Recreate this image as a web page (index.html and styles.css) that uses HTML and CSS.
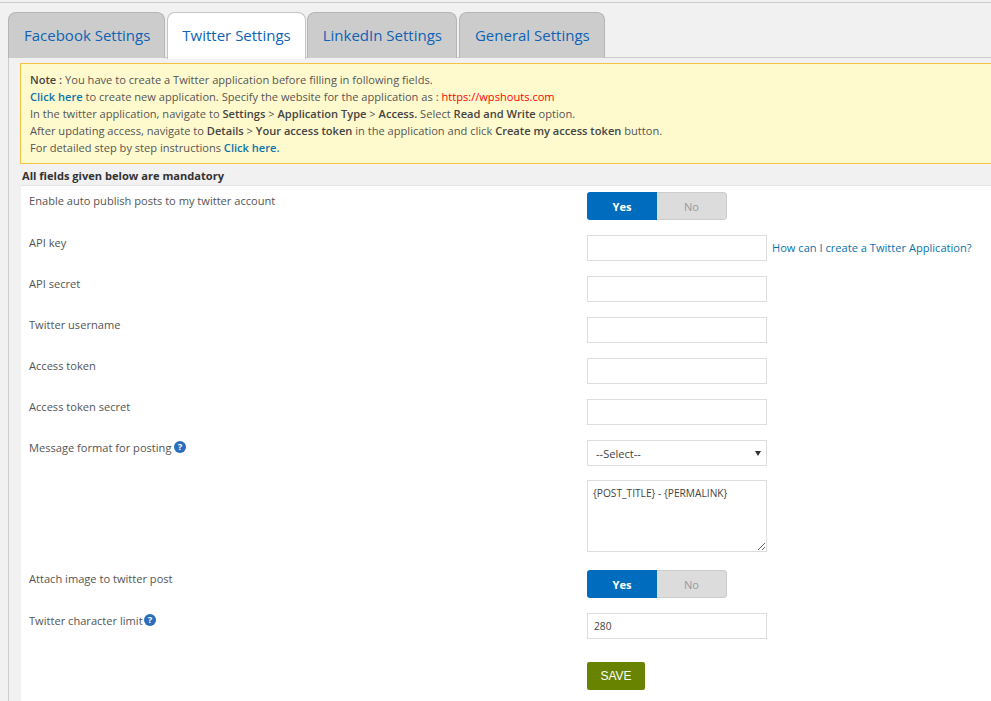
FILE: index.html
```html
<!DOCTYPE html>
<html lang="en">
<head>
<meta charset="utf-8">
<title>Twitter Settings</title>
<link rel="stylesheet" href="styles.css">
</head>
<body>
<div class="page">
  <nav class="tabs">
    <a class="tab">Facebook Settings</a>
    <a class="tab active">Twitter Settings</a>
    <a class="tab">LinkedIn Settings</a>
    <a class="tab">General Settings</a>
  </nav>
  <div class="content">
    <div class="note">
      <b>Note :</b> You have to create a Twitter application before filling in following fields.<br>
      <a class="link"><b>Click here</b></a> to create new application. Specify the website for the application as : <span class="red">https://wpshouts.com</span><br>
      In the twitter application, navigate to <b>Settings</b> &gt; <b>Application Type</b> &gt; <b>Access.</b> Select <b>Read and Write</b> option.<br>
      After updating access, navigate to <b>Details</b> &gt; <b>Your access token</b> in the application and click <b>Create my access token</b> button.<br>
      For detailed step by step instructions <a class="link"><b>Click here.</b></a>
    </div>
    <div class="mandatory">All fields given below are mandatory</div>
    <div class="panel">
      <div class="row row-toggle">
        <label class="label">Enable auto publish posts to my twitter account</label>
        <div class="field"><div class="toggle"><span class="yes">Yes</span><span class="no">No</span></div></div>
      </div>
      <div class="row">
        <label class="label">API key</label>
        <div class="field"><input class="input" type="text"><a class="help-link">How can I create a Twitter Application?</a></div>
      </div>
      <div class="row"><label class="label">API secret</label><div class="field"><input class="input" type="text"></div></div>
      <div class="row"><label class="label">Twitter username</label><div class="field"><input class="input" type="text"></div></div>
      <div class="row"><label class="label">Access token</label><div class="field"><input class="input" type="text"></div></div>
      <div class="row"><label class="label">Access token secret</label><div class="field"><input class="input" type="text"></div></div>
      <div class="row row-select">
        <label class="label">Message format for posting <svg class="q" viewBox="0 0 12 12"><circle cx="6" cy="6" r="6" fill="#2a6ebb"/><text x="6" y="9.4" text-anchor="middle" class="q-mark">?</text></svg></label>
        <div class="field"><div class="select"><span>--Select--</span><i class="caret"></i></div></div>
      </div>
      <div class="row row-area">
        <div class="label"></div>
        <div class="field"><textarea class="area">{POST_TITLE} - {PERMALINK}</textarea></div>
      </div>
      <div class="row row-toggle">
        <label class="label">Attach image to twitter post</label>
        <div class="field"><div class="toggle"><span class="yes">Yes</span><span class="no">No</span></div></div>
      </div>
      <div class="row row-limit">
        <label class="label">Twitter character limit <svg class="q q-tight" viewBox="0 0 12 12"><circle cx="6" cy="6" r="6" fill="#2a6ebb"/><text x="6" y="9.4" text-anchor="middle" class="q-mark">?</text></svg></label>
        <div class="field"><input class="input input-small" type="text" value="280"></div>
      </div>
      <div class="row">
        <div class="label"></div>
        <div class="field"><button class="save" type="button">SAVE</button></div>
      </div>
    </div>
  </div>
</div>
</body>
</html>
```
FILE: styles.css
```css
* { box-sizing: border-box; }
html, body { margin: 0; height: 100%; overflow: hidden; }
body {
  background: #f1f1f1;
  font-family: "Open Sans", sans-serif;
  font-size: 11.1px;
  color: #444;
}
.page { border-top: 1px solid #ccc; margin-top: 2px; padding: 9px 0 0 8px; height: 699px; }
.tabs { display: flex; gap: 2px; height: 46px; border-bottom: 1px solid #ccc; }
.tab {
  height: 46px;
  padding: 11px 14px 0 15px;
  background: #ccc;
  border: 1px solid #b9b3b3;
  border-bottom: 0;
  border-radius: 8px 8px 0 0;
  font-size: 15px;
  line-height: 22px;
  font-weight: 500;
  color: #0e63b5;
  white-space: nowrap;
}
.tab.active { background: #fff; height: 47px; padding-left: 14px; border-color: #c8c4c4; }
.tab:nth-child(3) { margin-left: -1px; }
.content { border-left: 1px solid #ccc; height: 644px; padding: 5px 0 0 11px; }
.note {
  height: 101px;
  background: #fffacd;
  border: 1px solid #f5c343;
  border-right: 0;
  padding: 7px 9px;
  line-height: 17px;
  color: #555;
}
.note b { color: #444; font-weight: 600; }
.note .link b, .link { color: #0b73aa; }
.red { color: #f00; }
.mandatory { height: 21px; padding: 4px 0 0 2px; line-height: 15px; font-weight: 700; color: #333; }
.panel { background: #fff; border-top: 1px solid #e5e5e5; margin-left: 1px; height: 530px; padding-top: 6px; }
.row { display: flex; margin-bottom: 15px; }
.row-select { margin-bottom: 14px; }
.row-area { margin-bottom: 18px; }
.row-limit { margin-bottom: 23px; }
.label { width: 566px; padding: 0 0 0 8px; line-height: 15px; color: #555; }
.row-toggle .label { padding-top: 1px; }
.field { display: flex; align-items: center; }
.input {
  width: 180px;
  height: 26px;
  background: #fff;
  border: 1px solid #ddd;
  padding: 0 6px;
  font: 11.1px "Open Sans", sans-serif;
  color: #444;
}
.input-small { font-size: 10.2px; }
.help-link { margin: -2px 0 0 5px; color: #0b73aa; }
.toggle { display: flex; width: 140px; height: 28px; border-radius: 3px; overflow: hidden; line-height: 29px; text-align: center; }
.yes { width: 70px; background: #006cbe; color: #fff; font-weight: 700; }
.no { width: 70px; background: #dcdcdc; color: #999; border: 1px solid #ccc; border-left: 0; border-radius: 0 3px 3px 0; line-height: 27px; }
.q { width: 12px; height: 12px; margin: 1px 0 0 0; vertical-align: top; }
.q-tight { margin-left: -1px; }
.q-mark { fill: #fff; font: 700 9.5px "Open Sans", sans-serif; }
.select {
  width: 180px;
  height: 26px;
  border: 1px solid #ddd;
  padding: 0 5px 0 8px;
  line-height: 25px;
  display: flex;
  justify-content: space-between;
  align-items: center;
  color: #444;
}
.caret { width: 0; height: 0; border: 3.5px solid transparent; border-top: 5px solid #333; border-bottom: 0; }
.area {
  display: block;
  width: 180px;
  height: 72px;
  border: 1px solid #ddd;
  padding: 5px;
  margin: 0;
  font: 10.2px/15px "Open Sans", sans-serif;
  color: #444;
  resize: vertical;
}
.save {
  width: 58px;
  height: 28px;
  background: #678300;
  color: #fff;
  border: 0;
  border-radius: 2px;
  padding: 0;
  font: 12px "Liberation Sans", sans-serif;
}
```
